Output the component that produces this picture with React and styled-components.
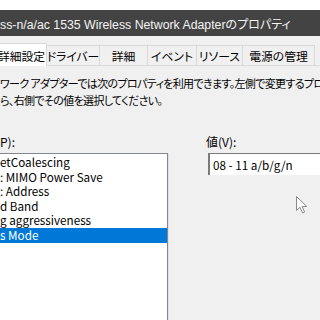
import React from 'react'
import styled, { createGlobalStyle } from 'styled-components'

const GlobalStyle = createGlobalStyle`
  html, body {
    margin: 0;
    padding: 0;
    background: #f0f0f0;
  }
  body {
    font-family: "Noto Sans CJK JP", "Noto Sans", sans-serif;
  }
`

const tabs = [
  { label: '詳細設定', width: 50 },
  { label: 'ドライバー', width: 53 },
  { label: '詳細', width: 48 },
  { label: 'イベント', width: 49 },
  { label: 'リソース', width: 46 },
  { label: '電源の管理', width: 72 }
]

const properties = [
  'etCoalescing',
  ': MIMO Power Save',
  ': Address',
  'd Band',
  'g aggressiveness',
  's Mode'
]

function Pointer() {
  return (
    <Cursor width="12" height="18" viewBox="0 0 12 18">
      <path
        d="M0.5 0.5 L0.5 14.5 L4 11.2 L6.6 17 L8.6 16.1 L6.1 10.5 L10.8 10.5 Z"
        fill="#fff"
        stroke="#8a8a8a"
        strokeWidth="1"
        strokeLinejoin="round"
      />
    </Cursor>
  )
}

export default function App() {
  return (
    <Screen>
      <GlobalStyle />
      <TopStrip />
      <TitleBar>
        <Latin>ss-n/a/ac 1535 Wireless Network Adapter</Latin>のプロパティ
      </TitleBar>
      <TabRow>
        {tabs.map((t, i) => (
          <Tab key={t.label} active={i === 0} width={t.width}>
            {t.label}
          </Tab>
        ))}
      </TabRow>
      <Panel>
        <Description>
          <p>ワーク アダプターでは次のプロパティを利用できます。左側で変更するプロパティを</p>
          <p>ら、右側でその値を選択してください。</p>
        </Description>
        <Columns>
          <ListColumn>
            <Label>P):</Label>
            <ListBox>
              {properties.map((p, i) => (
                <Item key={p} selected={i === properties.length - 1}>
                  {p}
                </Item>
              ))}
            </ListBox>
          </ListColumn>
          <ValueColumn>
            <Label>値(V):</Label>
            <ValueBox>08 - 11 a/b/g/n</ValueBox>
          </ValueColumn>
        </Columns>
      </Panel>
      <Pointer />
    </Screen>
  )
}

const Screen = styled.div`
  position: relative;
  width: 320px;
  height: 320px;
  overflow: hidden;
  background: #f0f0f0;
  color: #000;
  font-family: "Noto Sans CJK JP", "Noto Sans", sans-serif;
  font-feature-settings: "palt";
  font-size: 12px;
  display: flex;
  flex-direction: column;
`

const TopStrip = styled.div`
  height: 10px;
  flex: none;
  background: #ffffff;
`

const TitleBar = styled.div`
  height: 26px;
  flex: none;
  background: #434343;
  color: #f4f4f4;
  font-size: 12px;
  line-height: 27px;
  white-space: nowrap;
  overflow: hidden;
`

const Latin = styled.span`
  font-family: "Liberation Sans", Arial, sans-serif;
  font-size: 12.3px;
`

const TabRow = styled.div`
  display: flex;
  align-items: flex-end;
  height: 29px;
  flex: none;
  border-bottom: 1px solid #d9d9d9;
  margin-left: -3px;
`

const Tab = styled.div`
  box-sizing: border-box;
  width: ${props => props.width}px;
  height: ${props => (props.active ? '23px' : '20px')};
  margin-bottom: ${props => (props.active ? '-1px' : '0')};
  background: ${props => (props.active ? '#ffffff' : '#f0f0f0')};
  border: 1px solid #d9d9d9;
  border-left: none;
  border-bottom: none;
  font-size: 11.8px;
  white-space: nowrap;
  display: flex;
  align-items: center;
  justify-content: center;
`

const Panel = styled.div`
  flex: 1;
  display: flex;
  flex-direction: column;
`

const Description = styled.div`
  padding-top: 9px;
  white-space: nowrap;
  overflow: hidden;
  font-size: 11px;
  letter-spacing: -0.65px;

  p {
    margin: 0;
    line-height: 17px;
  }
`

const Columns = styled.div`
  flex: 1;
  display: grid;
  grid-template-columns: 168px 1fr;
  margin-top: 25px;
`

const ListColumn = styled.div`
  display: flex;
  flex-direction: column;
`

const ValueColumn = styled.div`
  display: flex;
  flex-direction: column;
  padding-left: 38px;
`

const Label = styled.div`
  height: 16px;
  line-height: 16px;
  margin-bottom: 3px;
  white-space: nowrap;
`

const ListBox = styled.div`
  flex: 1;
  background: #ffffff;
  border-top: 1px solid #828790;
  border-right: 1px solid #828790;
  box-shadow: 1px 0 0 #e3e3e3;
  padding-top: 1px;
`

const Item = styled.div`
  height: 14.6px;
  line-height: 14.6px;
  font-size: 11.7px;
  white-space: nowrap;
  background: ${props => (props.selected ? '#0078d7' : 'transparent')};
  color: ${props => (props.selected ? '#ffffff' : '#000000')};
`

const ValueBox = styled.div`
  height: 21px;
  line-height: 21px;
  margin-left: 2px;
  background: #ffffff;
  border-top: 1px solid #7a7a7a;
  border-left: 2px solid #7a7a7a;
  padding-left: 3px;
  font-size: 11.7px;
  white-space: nowrap;
`

const Cursor = styled.svg`
  position: absolute;
  left: 296px;
  top: 196px;
`
